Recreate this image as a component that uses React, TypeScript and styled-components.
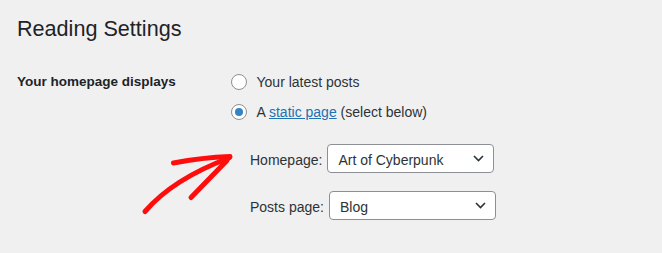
import React from "react";
import styled, { createGlobalStyle } from "styled-components";

const GlobalStyle = createGlobalStyle`
  html, body {
    margin: 0;
    padding: 0;
    background: #f0f0f1;
  }
  body {
    font-family: "Liberation Sans", Arial, sans-serif;
    color: #1d2327;
  }
`;

const Page = styled.div`
  position: relative;
  width: 662px;
  height: 253px;
  padding: 14.5px 17px 0;
  box-sizing: border-box;
  overflow: hidden;
`;

const Title = styled.h1`
  margin: 0;
  font-size: 21.6px;
  line-height: 28px;
  font-weight: 400;
  color: #1d2327;
`;

const FormTable = styled.div`
  display: grid;
  grid-template-columns: 214px 1fr;
  margin-top: 27px;
`;

const RowLabel = styled.div`
  font-size: 13.5px;
  font-weight: 700;
  line-height: 24px;
  color: #1d2327;
`;

const Fieldset = styled.div`
  display: flex;
  flex-direction: column;
  gap: 6.5px;
`;

const RadioRow = styled.label`
  display: flex;
  align-items: center;
  gap: 9.5px;
  height: 24px;
  font-size: 14px;
  color: #2c3338;
`;

const RadioCircle = styled.span<{ $checked?: boolean }>`
  position: relative;
  width: 16px;
  height: 16px;
  box-sizing: border-box;
  border: 1px solid #8c8f94;
  border-radius: 50%;
  background: #fff;
  flex-shrink: 0;

  &::before {
    content: "";
    display: ${(p) => (p.$checked ? "block" : "none")};
    position: absolute;
    left: 3px;
    top: 3px;
    width: 8px;
    height: 8px;
    border-radius: 50%;
    background: #3582c4;
  }
`;

const Link = styled.a`
  color: #2271b1;
  text-decoration: underline;
`;

const SubList = styled.div`
  display: flex;
  flex-direction: column;
  gap: 18px;
  margin: 20px 0 0 19px;
`;

const SelectRow = styled.div`
  display: flex;
  align-items: center;
  gap: 5px;
  font-size: 14px;
  color: #2c3338;
`;

const SelectLabel = styled.span`
  padding-top: 3px;
`;

const SelectBox = styled.div`
  display: flex;
  align-items: center;
  justify-content: space-between;
  width: 167px;
  height: 29px;
  box-sizing: border-box;
  padding: 3px 9px 0 10px;
  border: 1px solid #8c8f94;
  border-radius: 4px;
  background: #fff;
  font-size: 14px;
  color: #2c3338;

  svg {
    margin-top: -3px;
  }
`;

const Arrow = styled.svg`
  position: absolute;
  left: 130px;
  top: 145px;
  width: 110px;
  height: 75px;
`;

const Chevron = () => (
  <svg width="11" height="7" viewBox="0 0 11 7">
    <path d="M1 1 L5.5 5.5 L10 1" fill="none" stroke="#2c3338" strokeWidth="1.6" />
  </svg>
);

const Select = ({ value }: { value: string }) => (
  <SelectBox>
    <span>{value}</span>
    <Chevron />
  </SelectBox>
);

const App = () => {
  return (
    <>
      <GlobalStyle />
      <Page>
        <Title>Reading Settings</Title>
        <FormTable>
          <RowLabel>Your homepage displays</RowLabel>
          <div>
            <Fieldset>
              <RadioRow>
                <RadioCircle />
                Your latest posts
              </RadioRow>
              <RadioRow>
                <RadioCircle $checked />
                <span>
                  A <Link href="#">static page</Link> (select below)
                </span>
              </RadioRow>
            </Fieldset>
            <SubList>
              <SelectRow>
                <SelectLabel>Homepage:</SelectLabel>
                <Select value="Art of Cyberpunk" />
              </SelectRow>
              <SelectRow>
                <SelectLabel>Posts page:</SelectLabel>
                <Select value="Blog" />
              </SelectRow>
            </SubList>
          </div>
        </FormTable>
        <Arrow viewBox="0 0 110 75">
          <g fill="none" stroke="#ff0d0d" strokeWidth="5" strokeLinecap="round" strokeLinejoin="round">
            <path d="M15 66.5 Q43 34 99 13" />
            <path d="M43.5 18 Q72 12.5 100 11.5" />
            <path d="M61 52.5 L97 15.5" />
          </g>
        </Arrow>
      </Page>
    </>
  );
};

export default App;
